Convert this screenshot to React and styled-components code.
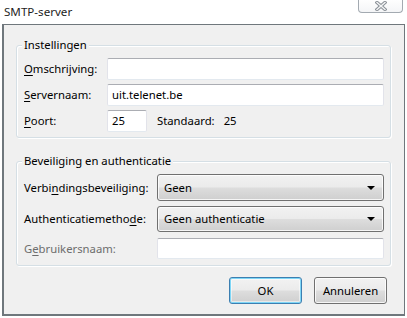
import React from "react";
import styled, { createGlobalStyle } from "styled-components";

const Global = createGlobalStyle`
  html, body { margin: 0; padding: 0; background: #ffffff; }
  body { font-family: "Noto Sans", "Liberation Sans", sans-serif; font-size: 11.3px; color: #000; }
`;

const Page = styled.div`
  width: 407px;
  height: 318px;
  overflow: hidden;
  background: #ffffff;
`;

const TitleBar = styled.div`
  height: 24px;
  display: flex;
  justify-content: space-between;
  align-items: flex-start;
  padding: 0 4px 0 4px;
  box-sizing: border-box;
`;

const Title = styled.div`
  padding-top: 4px;
  font-size: 11.6px;
  line-height: 16px;
  color: #1e1e1e;
`;

const CloseButton = styled.div`
  width: 45px;
  height: 14px;
  margin-top: -1px;
  box-sizing: border-box;
  border: 1px solid #a3aab1;
  border-top: none;
  border-radius: 0 0 4px 4px;
  background: linear-gradient(#ffffff, #f4f5f7);
  display: flex;
  align-items: center;
  justify-content: center;
`;

const Client = styled.div`
  margin-left: 2px;
  width: 403px;
  height: 292px;
  box-sizing: border-box;
  border: 1px solid #6f777c;
  border-left-width: 2px;
  border-bottom-width: 2px;
  background: #f0f0f0;
  padding: 20px 13px 0 12px;
  display: flex;
  flex-direction: column;
`;

const Group = styled.div`
  position: relative;
  border: 1px solid #d5dfe5;
  border-radius: 3px;
  box-shadow: inset 1px 1px 0 #ffffff, 1px 1px 0 #ffffff;
  padding: ${(p) => p.$pad};
  margin-top: ${(p) => p.$mt || 0}px;
  display: flex;
  flex-direction: column;
  gap: ${(p) => p.$gap}px;
`;

const Legend = styled.div`
  position: absolute;
  top: -9px;
  left: 5px;
  padding: 0 2px;
  background: #f0f0f0;
  line-height: 16px;
`;

const Row = styled.div`
  display: flex;
  align-items: center;
  margin-top: ${(p) => p.$mt || 0}px;
`;

const Label = styled.label`
  width: ${(p) => p.$w}px;
  flex: none;
  line-height: 16px;
  color: ${(p) => (p.$disabled ? "#6d6d6d" : "#000")};
  white-space: nowrap;
  u { text-decoration: underline; text-underline-offset: 2px; }
`;

const Input = styled.div`
  box-sizing: border-box;
  height: ${(p) => p.$h || 22}px;
  width: ${(p) => (p.$w ? p.$w + "px" : "auto")};
  flex: ${(p) => (p.$w ? "none" : "1")};
  background: #ffffff;
  border: 1px solid #e2e3ea;
  border-top-color: #abadb3;
  border-bottom-color: #e3e9ef;
  border-radius: 2px;
  padding-left: 4px;
  display: flex;
  align-items: center;
  line-height: 16px;
`;

const Plain = styled.span`
  margin-left: ${(p) => p.$ml}px;
  line-height: 16px;
`;

const Select = styled.div`
  flex: 1;
  box-sizing: border-box;
  height: ${(p) => p.$h}px;
  border: 1px solid #707070;
  border-radius: 3px;
  background: linear-gradient(#f2f2f2 0%, #ebebeb 48%, #dddddd 52%, #cfcfcf 100%);
  box-shadow: inset 0 0 0 1px rgba(255, 255, 255, 0.8);
  display: flex;
  align-items: center;
  justify-content: space-between;
  padding: 0 8px 0 6px;
  line-height: 16px;
`;

const Arrow = styled.span`
  width: 0;
  height: 0;
  border-left: 4px solid transparent;
  border-right: 4px solid transparent;
  border-top: 4px solid #000;
`;

const Buttons = styled.div`
  display: flex;
  justify-content: flex-end;
  gap: 12px;
  margin-top: 11px;
  padding-right: 4px;
`;

const Button = styled.div`
  width: 73px;
  height: 27px;
  box-sizing: border-box;
  border: 1px solid ${(p) => (p.$default ? "#3c7fb1" : "#707070")};
  border-radius: 3px;
  background: linear-gradient(#f2f2f2 0%, #ebebeb 48%, #dddddd 52%, #cfcfcf 100%);
  box-shadow: ${(p) =>
    p.$default ? "inset 0 0 0 1px #7fd6f6, inset 0 0 0 2px rgba(255,255,255,0.5)" : "inset 0 0 0 1px rgba(255,255,255,0.8)"};
  display: flex;
  align-items: center;
  justify-content: center;
  line-height: 16px;
`;

export default function App() {
  return (
    <Page>
      <Global />
      <TitleBar>
        <Title>SMTP-server</Title>
        <CloseButton>
          <svg width="12" height="10" viewBox="0 0 12 10">
            <path d="M2 1.5 L10 8.5 M10 1.5 L2 8.5" stroke="#8a9097" strokeWidth="3.4" strokeLinecap="square" fill="none" />
            <path d="M2 1.5 L10 8.5 M10 1.5 L2 8.5" stroke="#f4f5f6" strokeWidth="1.4" strokeLinecap="square" fill="none" />
          </svg>
        </CloseButton>
      </TitleBar>
      <Client>
        <Group $pad="12px 6px 5px 7px" $gap={4}>
          <Legend>Instellingen</Legend>
          <Row>
            <Label $w={83}><u>O</u>mschrijving:</Label>
            <Input />
          </Row>
          <Row>
            <Label $w={83}><u>S</u>ervernaam:</Label>
            <Input>uit.telenet.be</Input>
          </Row>
          <Row>
            <Label $w={83}><u>P</u>oort:</Label>
            <Input $w={40}>25</Input>
            <Plain $ml={10}>Standaard:</Plain>
            <Plain $ml={9}>25</Plain>
          </Row>
        </Group>
        <Group $mt={23} $pad="12px 6px 6px 7px" $gap={5}>
          <Legend>Beveiliging en authenticatie</Legend>
          <Row>
            <Label $w={133}>Verbi<u>n</u>dingsbeveiliging:</Label>
            <Select $h={27}>
              <span>Geen</span>
              <Arrow />
            </Select>
          </Row>
          <Row>
            <Label $w={133}>Authenticatiemetho<u>d</u>e:</Label>
            <Select $h={26}>
              <span>Geen authenticatie</span>
              <Arrow />
            </Select>
          </Row>
          <Row $mt={1}>
            <Label $w={133} $disabled>G<u>e</u>bruikersnaam:</Label>
            <Input $h={21} />
          </Row>
        </Group>
        <Buttons>
          <Button $default>OK</Button>
          <Button>Annuleren</Button>
        </Buttons>
      </Client>
    </Page>
  );
}
